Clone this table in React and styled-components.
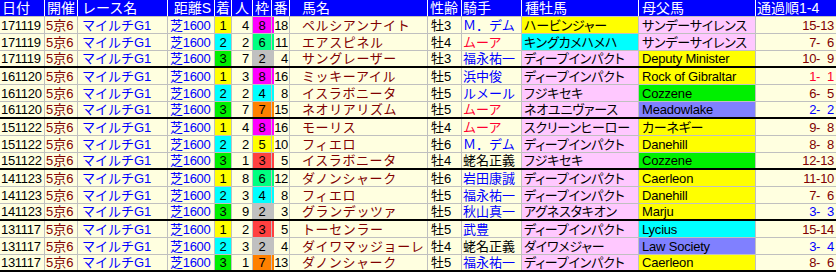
import React from "react";
import styled, { createGlobalStyle } from "styled-components";

const GlobalStyle = createGlobalStyle`
  body {
    margin: 0;
    background: #ffffff;
    font-family: "Liberation Sans", "Noto Sans CJK JP", sans-serif;
  }
`;

const COLS =
  "45px 33px 90px 47px 17px 21px 19px 18px 138px 34px 60px 117px 117px 80px";

const WAKU = {
  1: "#ffffff",
  2: "#c0c0c0",
  3: "#ff4040",
  4: "#00ffff",
  5: "#ffff00",
  6: "#00ff80",
  7: "#ff8000",
  8: "#ff00ff"
};

const PLACE = { 1: "#ffff00", 2: "#00ffff", 3: "#00f000" };

const BG = {
  pink: "#ffc8ff",
  yellow: "#ffff00",
  cyan: "#00ffff",
  green: "#00f000",
  violet: "#8080ff"
};

const INK = {
  blue: "#0000ff",
  red: "#ff0030",
  black: "#000000",
  maroon: "#800000"
};

const rows = [
  ["171119", 1, 4, 8, 18, "ペルシアンナイト", "牡3", "Ｍ．デム", "blue", "ハービンジャー", "yellow", "サンデーサイレンス", "pink", "15-13", "maroon"],
  ["171119", 2, 2, 6, 11, "エアスピネル", "牡4", "ムーア", "red", "キングカメハメハ", "cyan", "サンデーサイレンス", "pink", "7-\u20076", "maroon"],
  ["171119", 3, 7, 2, 4, "サングレーザー", "牡3", "福永祐一", "blue", "ディープインパクト", "pink", "Deputy Minister", "yellow", "10-\u20079", "maroon"],
  ["161120", 1, 3, 8, 16, "ミッキーアイル", "牡5", "浜中俊", "blue", "ディープインパクト", "pink", "Rock of Gibraltar", "yellow", "1-\u20071", "red"],
  ["161120", 2, 2, 4, 8, "イスラボニータ", "牡5", "ルメール", "blue", "フジキセキ", "pink", "Cozzene", "green", "6-\u20075", "maroon"],
  ["161120", 3, 7, 7, 15, "ネオリアリズム", "牡5", "ムーア", "red", "ネオユニヴァース", "pink", "Meadowlake", "violet", "2-\u20072", "blue"],
  ["151122", 1, 4, 8, 16, "モーリス", "牡4", "ムーア", "red", "スクリーンヒーロー", "pink", "カーネギー", "yellow", "9-\u20078", "maroon"],
  ["151122", 2, 2, 5, 10, "フィエロ", "牡6", "Ｍ．デム", "blue", "ディープインパクト", "pink", "Danehill", "yellow", "8-\u20078", "maroon"],
  ["151122", 3, 1, 3, 5, "イスラボニータ", "牡4", "蛯名正義", "black", "フジキセキ", "pink", "Cozzene", "green", "12-13", "maroon"],
  ["141123", 1, 8, 6, 12, "ダノンシャーク", "牡6", "岩田康誠", "blue", "ディープインパクト", "pink", "Caerleon", "yellow", "11-10", "maroon"],
  ["141123", 2, 3, 4, 8, "フィエロ", "牡5", "福永祐一", "blue", "ディープインパクト", "pink", "Danehill", "yellow", "7-\u20076", "maroon"],
  ["141123", 3, 9, 2, 3, "グランデッツァ", "牡5", "秋山真一", "blue", "アグネスタキオン", "pink", "Marju", "yellow", "3-\u20073", "blue"],
  ["131117", 1, 2, 3, 5, "トーセンラー", "牡5", "武豊", "blue", "ディープインパクト", "pink", "Lycius", "cyan", "15-14", "maroon"],
  ["131117", 2, 3, 2, 4, "ダイワマッジョーレ", "牡4", "蛯名正義", "black", "ダイワメジャー", "pink", "Law Society", "violet", "3-\u20074", "blue"],
  ["131117", 3, 1, 7, 13, "ダノンシャーク", "牡5", "福永祐一", "blue", "ディープインパクト", "pink", "Caerleon", "yellow", "8-\u20076", "maroon"]
];

const Table = styled.div`
  width: 836px;
  display: flex;
  flex-direction: column;
`;

const HeadRow = styled.div`
  display: grid;
  grid-template-columns: ${COLS};
  height: 17px;
  box-sizing: border-box;
  background: #0000ff;
  border-bottom: 1px solid #c0c0c0;
`;

const HeadCell = styled.div`
  display: flex;
  align-items: center;
  justify-content: ${p => p.$align || "flex-start"};
  padding: ${p => p.$pad || "0 2px"};
  border-right: 1px solid #ffffff;
  color: #ffffff;
  font-size: 14px;
  line-height: 16px;
  white-space: nowrap;
  box-sizing: border-box;
  font-feature-settings: ${p => (p.$prop ? '"palt"' : "normal")};

  &:last-child {
    border-right: none;
  }
`;

const Row = styled.div`
  display: grid;
  grid-template-columns: ${COLS};
  height: 17px;
  box-sizing: border-box;
  background: #ffffe0;
  border-bottom: ${p => (p.$end ? "2px solid #000000" : "1px solid #c0c0c0")};
`;

const Cell = styled.div`
  display: flex;
  align-items: center;
  justify-content: ${p => p.$align || "flex-start"};
  padding: ${p => p.$pad || "0 2px"};
  border-right: 1px solid #c0c0c0;
  background: ${p => p.$bg || "transparent"};
  color: ${p => p.$ink || "#000000"};
  font-size: 13px;
  line-height: 15px;
  white-space: pre;
  box-sizing: border-box;
  min-width: 0;

  &:last-child {
    border-right: none;
  }
`;

const NumCell = styled(Cell)`
  letter-spacing: -0.3px;
`;

const PropCell = styled(Cell)`
  font-feature-settings: "palt";
  letter-spacing: -0.2px;
`;

const UmabanCell = styled(NumCell)`
  border-left: 2px solid ${p => p.$stripe};
`;

const HorseName = styled(Cell)`
  color: #800000;
  letter-spacing: 0.6px;
`;

const headers = [
  ["日付", null, "0 2px"],
  ["開催", null, "0 2px"],
  ["レース名", null, "0 4px"],
  ["距離S", "flex-end", "0 3px"],
  ["着", "center", "0"],
  ["人", "center", "0"],
  ["枠", "center", "0"],
  ["番", "center", "0"],
  ["馬名", null, "0 12px"],
  ["性齢", null, "0 2px"],
  ["騎手", null, "0 1px"],
  ["種牡馬", null, "0 3px", true],
  ["母父馬", null, "0 3px", true],
  ["通過順1-4", null, "0 1px", true]
];

export default function App() {
  return (
    <>
      <GlobalStyle />
      <Table>
        <HeadRow>
          {headers.map(([label, align, pad, prop]) => (
            <HeadCell key={label} $align={align} $pad={pad} $prop={prop}>
              {label}
            </HeadCell>
          ))}
        </HeadRow>
        {rows.map((r, i) => {
          const [date, place, pop, waku, uma, horse, sex, jockey, jInk, sire, sireBg, dam, damBg, pass, passInk] = r;
          return (
            <Row key={i} $end={i % 3 === 2}>
              <NumCell $pad="0 1px">{date}</NumCell>
              <Cell $ink="#800000" $pad="0 1px">5京6</Cell>
              <Cell $ink="#0000ff" $pad="0 4px">マイルチG1</Cell>
              <NumCell $ink="#0000ff" $pad="0 2px">芝1600</NumCell>
              <Cell $bg={PLACE[place]} $align="center" $pad="0">{place}</Cell>
              <NumCell $align="flex-end" $pad="0 3px">{pop}</NumCell>
              <Cell $bg={WAKU[waku]} $align="center" $pad="0">{waku}</Cell>
              <UmabanCell $stripe={WAKU[waku]} $align="flex-end" $pad="0 1px 0 0">{uma}</UmabanCell>
              <HorseName $pad="0 4px 0 12px">{horse}</HorseName>
              <Cell $pad="0 3px">{sex}</Cell>
              <Cell $ink={INK[jInk]} $pad="0 1px">{jockey}</Cell>
              <PropCell $bg={BG[sireBg]} $pad="0 2px">{sire}</PropCell>
              <PropCell $bg={BG[damBg]} $pad="0 3px">{dam}</PropCell>
              <NumCell $ink={INK[passInk]} $align="flex-end" $pad="0 2px">{pass}</NumCell>
            </Row>
          );
        })}
      </Table>
    </>
  );
}
